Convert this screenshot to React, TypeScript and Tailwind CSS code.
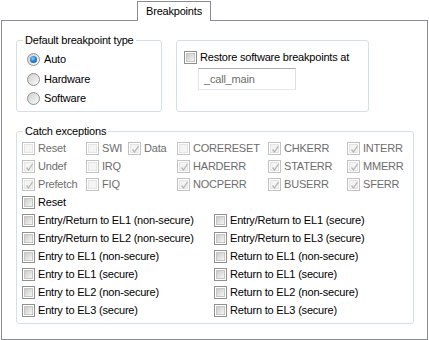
import React from "react";

type Item = { label: string; checked?: boolean; disabled?: boolean } | null;

function CheckBox({ checked, disabled }: { checked?: boolean; disabled?: boolean }) {
  return (
    <span
      className={`relative flex h-[13px] w-[13px] shrink-0 items-center justify-center border ${
        disabled ? "border-[#c2c2c2]" : "border-[#8e8f8f]"
      } bg-white`}
    >
      <span
        className={`h-[9px] w-[9px] border ${
          disabled
            ? "border-[#e4e4e4] bg-[#f4f4f4]"
            : "border-[#c6c6c6] bg-gradient-to-br from-[#cbcbcb] to-[#f6f6f6]"
        }`}
      />
      {checked ? (
        <svg className="absolute left-[1px] top-[1px]" width="11" height="11" viewBox="0 0 11 11">
          <polyline
            points="2.5,5.5 4.5,8 8.5,2"
            fill="none"
            stroke={disabled ? "#b4b4b4" : "#4a5f97"}
            strokeWidth="1.3"
          />
        </svg>
      ) : null}
    </span>
  );
}

function Radio({ selected }: { selected?: boolean }) {
  return (
    <span className="flex h-[13px] w-[13px] shrink-0 items-center justify-center rounded-full border border-[#8e8f8f] bg-gradient-to-br from-[#cfcfcf] to-[#fbfbfb]">
      {selected ? (
        <span className="h-[7px] w-[7px] rounded-full bg-[radial-gradient(circle_at_40%_35%,#8fd0ff_0%,#2b83cf_45%,#0b4a8a_100%)]" />
      ) : null}
    </span>
  );
}

function Check({ item }: { item: Item }) {
  if (!item) return <div />;
  return (
    <div className="flex h-[18px] items-center gap-[3px]">
      <CheckBox checked={item.checked} disabled={item.disabled} />
      <span className={item.disabled ? "text-[#6d6d6d]" : "text-black"}>{item.label}</span>
    </div>
  );
}

function GroupBox({
  title,
  className,
  children,
}: {
  title?: string;
  className: string;
  children: React.ReactNode;
}) {
  return (
    <div className={`relative rounded-[3px] border border-[#d5dfe5] ${className}`}>
      {title ? (
        <span className="absolute left-[6px] top-[-8px] bg-white px-[2px] leading-[14px] text-black">
          {title}
        </span>
      ) : null}
      {children}
    </div>
  );
}

const topRows: Item[][] = [
  [
    { label: "Reset", disabled: true },
    { label: "SWI", disabled: true },
    { label: "Data", checked: true, disabled: true },
    { label: "CORERESET", disabled: true },
    { label: "CHKERR", checked: true, disabled: true },
    { label: "INTERR", checked: true, disabled: true },
  ],
  [
    { label: "Undef", checked: true, disabled: true },
    { label: "IRQ", disabled: true },
    null,
    { label: "HARDERR", checked: true, disabled: true },
    { label: "STATERR", checked: true, disabled: true },
    { label: "MMERR", checked: true, disabled: true },
  ],
  [
    { label: "Prefetch", checked: true, disabled: true },
    { label: "FIQ", disabled: true },
    null,
    { label: "NOCPERR", checked: true, disabled: true },
    { label: "BUSERR", checked: true, disabled: true },
    { label: "SFERR", checked: true, disabled: true },
  ],
];

const pairRows: [string, string][] = [
  ["Entry/Return to EL1 (non-secure)", "Entry/Return to EL1 (secure)"],
  ["Entry/Return to EL2 (non-secure)", "Entry/Return to EL3 (secure)"],
  ["Entry to EL1 (non-secure)", "Return to EL1 (non-secure)"],
  ["Entry to EL1 (secure)", "Return to EL1 (secure)"],
  ["Entry to EL2 (non-secure)", "Return to EL2 (non-secure)"],
  ["Entry to EL3 (secure)", "Return to EL3 (secure)"],
];

export default function App() {
  return (
    <div
      className="h-[340px] w-[429px] bg-white pt-[1px] text-[11px] leading-[13px] tracking-[-0.2px] text-black"
      style={{ fontFamily: '"Liberation Sans", Arial, sans-serif' }}
    >
      <div className="relative z-10 -mb-px ml-[137px] flex h-[20px] w-[74px] items-center justify-center border border-b-0 border-[#898c95] bg-white pb-[1px]">
        Breakpoints
      </div>

      <div className="ml-[1px] h-[320px] w-[427px] border border-[#898c95] bg-white">
        <div className="ml-[14px] mt-[19px] flex gap-[14px]">
          <GroupBox title="Default breakpoint type" className="h-[72px] w-[146px] pl-[10px] pt-[9px]">
            {[
              { label: "Auto", selected: true },
              { label: "Hardware" },
              { label: "Software" },
            ].map((r) => (
              <div key={r.label} className="flex h-[19.5px] items-center gap-[4px]">
                <Radio selected={r.selected} />
                <span>{r.label}</span>
              </div>
            ))}
          </GroupBox>

          <GroupBox className="h-[72px] w-[193px] pl-[7px] pt-[10px]">
            <div className="flex h-[13px] items-center gap-[3px]">
              <CheckBox />
              <span>Restore software breakpoints at</span>
            </div>
            <div className="ml-[14px] mt-[4px] flex h-[22px] w-[98px] items-center border border-[#abadb3] border-b-[#e3e9ef] border-l-[#e2e3ea] border-r-[#dbdfe6] bg-white pl-[5px] text-[#6d6d6d]">
              _call_main
            </div>
          </GroupBox>
        </div>

        <GroupBox title="Catch exceptions" className="ml-[14px] mt-[19px] h-[193px] w-[398px] pl-[5px] pt-[7px]">
          <div className="grid grid-cols-[64px_42px_49px_91px_79px_1fr]">
            {topRows.flat().map((item, i) => (
              <Check key={i} item={item} />
            ))}
          </div>
          <Check item={{ label: "Reset" }} />
          <div className="grid grid-cols-[192px_1fr]">
            {pairRows.flat().map((label) => (
              <Check key={label} item={{ label }} />
            ))}
          </div>
        </GroupBox>
      </div>
    </div>
  );
}
